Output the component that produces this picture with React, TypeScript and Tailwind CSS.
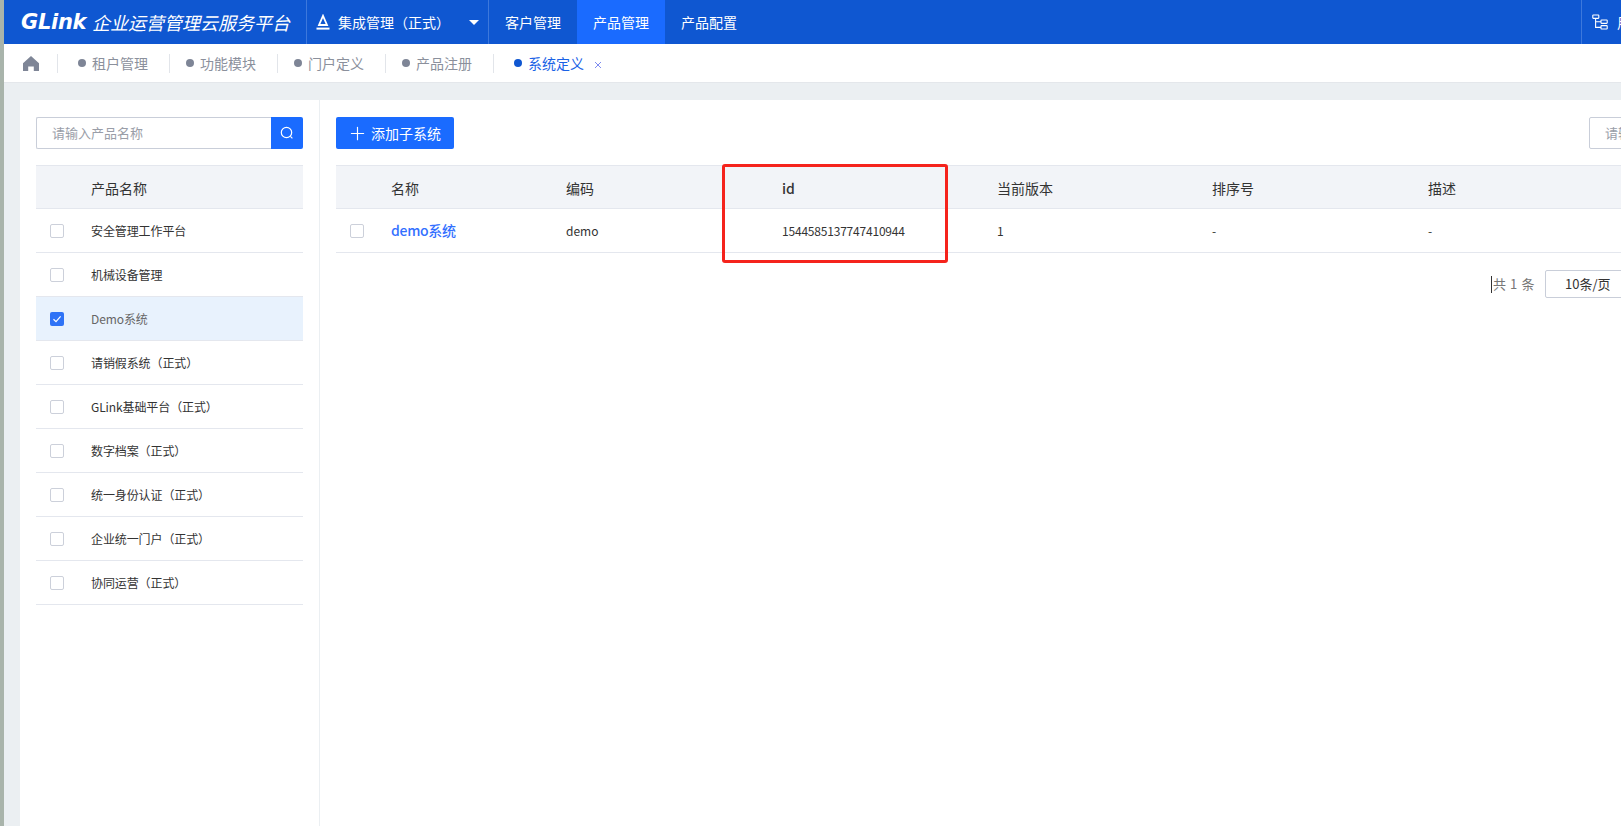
import React from 'react';
import { Plus } from 'lucide-react';

const FONT = '"Noto Sans CJK SC", "Noto Sans", sans-serif';

const tabs = ['租户管理', '功能模块', '门户定义', '产品注册'];
const products = [
  '安全管理工作平台',
  '机械设备管理',
  'Demo系统',
  '请销假系统（正式）',
  'GLink基础平台（正式）',
  '数字档案（正式）',
  '统一身份认证（正式）',
  '企业统一门户（正式）',
  '协同运营（正式）',
];
const columns = ['名称', '编码', 'id', '当前版本', '排序号', '描述'];
const gridCols = 'grid grid-cols-[55px_175px_216px_215px_215px_216px_1fr] items-center';

const Checkbox: React.FC<{ checked?: boolean }> = ({ checked }) =>
  checked ? (
    <span className="flex h-[14px] w-[14px] items-center justify-center rounded-[2px] bg-[#2f73f6]">
      <svg width="10" height="10" viewBox="0 0 10 10" fill="none" stroke="#fff" strokeWidth="1.2">
        <path d="M1.5 5.2 4 7.6 8.6 2.4" />
      </svg>
    </span>
  ) : (
    <span className="block h-[14px] w-[14px] rounded-[2px] border border-[#ccd0da] bg-white" />
  );

const App: React.FC = () => {
  return (
    <div className="flex h-[826px] w-full overflow-hidden bg-white" style={{ fontFamily: FONT }}>
      <div className="w-1 shrink-0 bg-[#a9b4ab]" />
      <div className="flex min-w-0 flex-1 flex-col">
        {/* top bar */}
        <header className="flex h-11 shrink-0 items-center bg-[#0f57d1] text-white">
          <div className="flex w-[302px] shrink-0 items-center pl-[17px]">
            <span
              className="w-[68px] text-[21px] font-bold italic leading-none tracking-[-0.3px]"
              style={{ fontFamily: '"DejaVu Sans", sans-serif' }}
            >
              GLink
            </span>
            <span className="ml-[3px] whitespace-nowrap text-[18px] italic leading-none">企业运营管理云服务平台</span>
          </div>
          <div className="flex h-full w-[183px] shrink-0 items-center border-x border-[#3d78dc] pl-[9px] text-[14px]">
            <svg width="14" height="16" viewBox="0 0 14 16" fill="none" stroke="#fff" strokeWidth="1.8">
              <path d="M7 1.8 3 11h8Z" />
              <path d="M0.5 14.6h13" strokeWidth="2" />
            </svg>
            <span className="ml-2 whitespace-nowrap">集成管理（正式）</span>
            <span className="ml-auto mr-[9px] h-0 w-0 border-x-[5px] border-t-[5px] border-x-transparent border-t-white" />
          </div>
          <nav className="flex h-full text-[14px]">
            <div className="flex w-[88px] items-center justify-center">客户管理</div>
            <div className="flex w-[88px] items-center justify-center bg-[#1a6bff]">产品管理</div>
            <div className="flex w-[88px] items-center justify-center">产品配置</div>
          </nav>
          <div className="ml-auto flex h-full w-[40px] shrink-0 items-center overflow-hidden border-l border-[#3d78dc] pl-[10px] text-[14px]">
            <svg className="shrink-0" width="16" height="16" viewBox="0 0 16 16" fill="none" stroke="#fff" strokeWidth="1.1">
              <rect x="0.8" y="1" width="6" height="3.4" rx="0.6" />
              <rect x="9" y="6" width="6.2" height="3.4" rx="0.6" />
              <rect x="9" y="11.6" width="6.2" height="3.4" rx="0.6" />
              <path d="M3.6 4.4v9h5.4M3.6 7.7H9" />
            </svg>
            <span className="ml-[9px] whitespace-nowrap">用户</span>
          </div>
        </header>

        {/* tab strip */}
        <div className="flex h-[39px] shrink-0 items-center border-b border-[#e4e7eb] bg-white">
          <div className="flex h-[19px] w-[54px] shrink-0 items-center border-r border-[#e2e5ea] pl-[19px]">
            <svg width="16" height="15" viewBox="0 0 16 15" fill="#7e8596">
              <path d="M8 0 16 7.2V15h-5.2v-4.6H5.2V15H0V7.2Z" />
            </svg>
          </div>
          {tabs.map((t, i) => (
            <div
              key={t}
              className={`flex h-[19px] shrink-0 items-center border-r border-[#e2e5ea] text-[14px] text-[#8b909c] ${i === 0 ? 'w-[112px] pl-5' : 'w-[108px] pl-4'}`}
            >
              <span className="h-2 w-2 rounded-full bg-[#7e8596]" />
              <span className="ml-[6px] pt-px">{t}</span>
            </div>
          ))}
          <div className="flex items-center pl-5 text-[14px] text-[#1a62e6]">
            <span className="h-2 w-2 rounded-full bg-[#0f57d1]" />
            <span className="ml-[6px] pt-px">系统定义</span>
            <svg className="ml-[10px] mt-[3px]" width="8" height="8" viewBox="0 0 8 8" fill="none" stroke="#7f8cf0" strokeWidth="1">
              <path d="M1 1l6 6M7 1 1 7" />
            </svg>
          </div>
        </div>

        {/* content */}
        <div className="flex min-h-0 flex-1 bg-[#ebeff2] pl-4 pt-[17px]">
          <aside className="w-[300px] shrink-0 border-r border-[#ebeff2] bg-white px-4 pt-[17px]">
            <div className="flex h-8 w-[267px]">
              <div className="flex flex-1 items-center rounded-l-[2px] border border-r-0 border-[#c9ced9] pl-[15px] text-[13px] text-[#9a9ea8]">
                请输入产品名称
              </div>
              <div className="flex w-8 items-center justify-center rounded-r-[2px] bg-[#1a6bff]">
                <svg width="14" height="14" viewBox="0 0 14 14" fill="none" stroke="#fff" strokeWidth="1.2">
                  <circle cx="6.5" cy="6.5" r="5.2" />
                  <path d="m10.4 10.4 2 2" />
                </svg>
              </div>
            </div>
            <div className="mt-4 w-[267px]">
              <div className="flex h-11 items-center border-y border-[#e4e7ee] bg-[#f2f4f8] pl-[55px] pt-[2px] text-[14px] text-[#333]">产品名称</div>
              {products.map((p, i) => (
                <div key={p} className={`flex h-11 items-center border-b border-[#e4e7ee] pl-[14px] text-[12px] ${i === 2 ? 'bg-[#e8f2fd] text-[#666]' : 'text-[#333]'}`}>
                  <Checkbox checked={i === 2} />
                  <span className="ml-[27px] tracking-[-0.1px]">{p}</span>
                </div>
              ))}
            </div>
          </aside>

          <main className="relative min-w-0 flex-1 overflow-hidden bg-white pt-[17px]">
            <div className="w-[1356px] pl-4">
              <div className="flex items-center justify-between">
                <button className="flex h-8 w-[118px] items-center rounded-[2px] bg-[#1a6bff] pl-[11px] text-[14px] text-white">
                  <Plus size={21} strokeWidth={1.3} />
                  <span className="ml-[3px]">添加子系统</span>
                </button>
                <div className="flex h-8 w-[87px] items-center rounded-[2px] border border-[#c9ced9] pl-[15px] text-[13px] text-[#9a9ea8]">请输入名称</div>
              </div>

              <div className="mt-4">
                <div className={`${gridCols} h-11 border-y border-[#e4e7ee] bg-[#f2f4f8] pt-[2px] text-[14px] text-[#333]`}>
                  <span />
                  {columns.map((c) => (
                    <span key={c} className={c === 'id' ? 'font-medium' : ''}>{c}</span>
                  ))}
                </div>
                <div className={`${gridCols} h-11 border-b border-[#e4e7ee] text-[12px] text-[#333]`}>
                  <span className="pl-[14px]"><Checkbox /></span>
                  <span className="text-[14px] font-medium tracking-[-0.3px] text-[#3370ff]">demo系统</span>
                  <span>demo</span>
                  <span className="tracking-[-0.2px]">1544585137747410944</span>
                  <span>1</span>
                  <span>-</span>
                  <span>-</span>
                </div>
              </div>

              <div className="mt-[17px] flex items-center justify-end">
                <span className="mr-[1px] inline-block h-[17px] w-px bg-[#333]" />
                <span className="text-[13px] tracking-[0.6px] text-[#777]">共 1 条</span>
                <div className="ml-[10px] flex h-7 w-[131px] items-center rounded-[2px] border border-[#c9ced9] pl-[19px] text-[13px] text-[#333]">10条/页</div>
              </div>
            </div>

            {/* red annotation around the id column */}
            <div className="pointer-events-none absolute left-[402px] top-[64px] h-[99px] w-[226px] rounded-[3px] border-[3px] border-[#f5231c]" />
          </main>
        </div>
      </div>
    </div>
  );
};

export default App;
